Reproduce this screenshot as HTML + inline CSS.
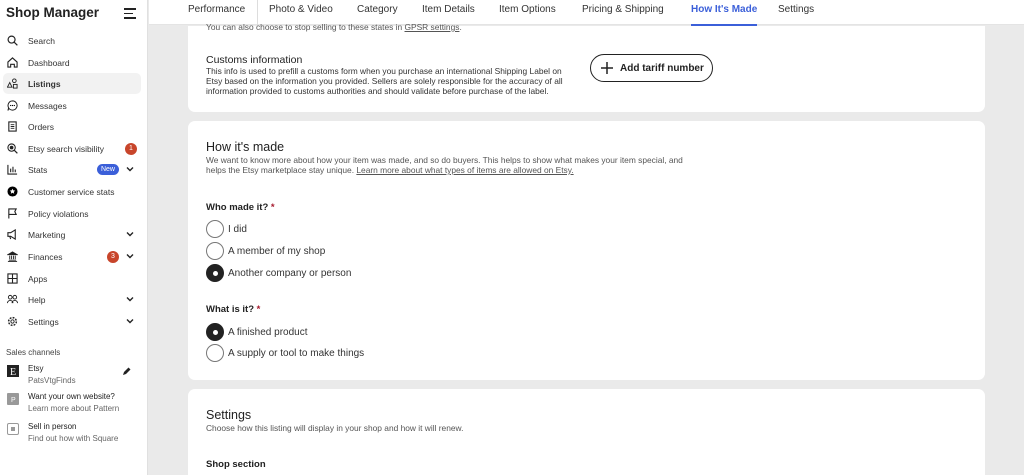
<!DOCTYPE html>
<html><head><meta charset="utf-8"><style>
*{box-sizing:border-box;margin:0;padding:0}
html,body{width:1024px;height:475px;overflow:hidden}
body{font-family:"Liberation Sans",sans-serif;background:#eaeaea;position:relative;color:#222}
.side{position:absolute;left:0;top:0;width:148px;height:475px;background:#fff;border-right:1px solid #e0e0e0}
.title{position:absolute;left:6px;top:5px;font-size:13.5px;font-weight:bold;color:#222}
.ham{position:absolute;left:124px;top:8px;width:12px}
.ham i{display:block;height:1.5px;background:#222;margin-bottom:3px}
.nav{position:absolute;left:0;width:148px;height:21px;font-size:8.5px;color:#333}
.nav .ic{position:absolute;left:7px;top:5px;width:11px;height:11px}
.nav .t{position:absolute;left:28px;top:6px}
.nav.sel{background:#f2f2f2;left:3px;width:138px;border-radius:5px}
.nav.sel .ic{left:4px}.nav.sel .t{left:25px;font-weight:bold}
.chev{position:absolute;left:126px;top:7px;width:8px;height:6px}
.badge{position:absolute;top:5px;width:12px;height:12px;border-radius:50%;background:#c8452b;color:#fff;font-size:7px;text-align:center;line-height:12px}
.new{position:absolute;left:97px;top:5px;width:22px;height:11px;border-radius:6px;background:#3b5fd9;color:#fff;font-size:7px;text-align:center;line-height:11px}
.sc{position:absolute;left:6px;top:348px;font-size:8px;color:#444}
.ch{position:absolute;left:7px;font-size:8px;color:#222}
.ch b{font-weight:normal;display:block}
.ch em{font-style:normal;color:#666;display:block;margin-top:1px}
.ch .sq{position:absolute;left:0;top:2px;width:12px;height:12px}
.ch div{position:absolute;left:21px;top:0;white-space:nowrap;line-height:11px}
.tabs{position:absolute;left:149px;top:0;right:0;height:25px;background:#fff;border-bottom:1px solid #e4e4e4;font-size:10px;color:#333}
.tabs span{position:absolute;top:4px}
.tabs .act{color:#3b5fd9;font-weight:bold}
.tabs .act:after{content:"";position:absolute;left:0;right:0;top:20px;height:2px;background:#3b5fd9}
.card{position:absolute;left:188px;width:797px;background:#fff;border-radius:7px}
.h{font-size:12.5px;position:absolute;left:18px;color:#222}
.p{font-size:8.4px;color:#555;position:absolute;left:18px;line-height:10px;white-space:nowrap}
.lab{font-size:9.5px;position:absolute;left:18px;font-weight:bold;color:#222}
.lab i{color:#a61a2e;font-style:normal}
.r{position:absolute;left:18px;font-size:10px;color:#333}
.r .c{position:absolute;left:0;top:0;width:18px;height:18px;border:1px solid #777;border-radius:50%}
.r .c.on{background:#222;border-color:#222}
.r .c.on:after{content:"";position:absolute;left:5.5px;top:5.5px;width:5px;height:5px;border-radius:50%;background:#fff}
.r span{position:absolute;left:22px;top:4px;white-space:nowrap}
.btn{position:absolute;left:402px;top:28px;width:123px;height:28px;border:1.3px solid #222;border-radius:14px;font-size:10px;font-weight:bold;line-height:28px;padding-left:29px;white-space:nowrap}
.btn svg{position:absolute;left:10px;top:7px;width:12px;height:12px}
</style></head><body>
<svg width="0" height="0" style="position:absolute"><defs><symbol id="cv" viewBox="0 0 8 6"><path d="M1 1.5l3 3 3-3" fill="none" stroke="#222" stroke-width="1.4"/></symbol></defs></svg>
<div class="side">
<div class="title">Shop Manager</div>
<div class="ham"><i></i><i style="width:9px"></i><i></i></div>
<div class="nav" style="top:30px"><svg class="ic" viewBox="0 0 12 12"><circle cx="5" cy="5" r="3.8" fill="none" stroke="#222" stroke-width="1.3"/><path d="M8 8l3.3 3.3" stroke="#222" stroke-width="1.3"/></svg><span class="t">Search</span></div>
<div class="nav" style="top:52px"><svg class="ic" viewBox="0 0 12 12"><path d="M1 11V5.5L6 1l5 4.5V11H8V8H4v3z" fill="none" stroke="#222" stroke-width="1.2"/></svg><span class="t">Dashboard</span></div>
<div class="nav sel" style="top:73px"><svg class="ic" viewBox="0 0 12 12"><circle cx="8" cy="3" r="2" fill="none" stroke="#222"/><path d="M3 5L.5 10h5z" fill="none" stroke="#222"/><rect x="7" y="7" width="4" height="4" fill="none" stroke="#222"/></svg><span class="t">Listings</span></div>
<div class="nav" style="top:95px"><svg class="ic" viewBox="0 0 12 12"><path d="M6 1a5 5 0 1 1-4 8L1 11.5l.8-3A5 5 0 0 1 6 1z" fill="none" stroke="#222" stroke-width="1.1"/><circle cx="4" cy="6" r=".7"/><circle cx="6" cy="6" r=".7"/><circle cx="8" cy="6" r=".7"/></svg><span class="t">Messages</span></div>
<div class="nav" style="top:116px"><svg class="ic" viewBox="0 0 12 12"><rect x="2" y="1" width="8" height="10" fill="none" stroke="#222" stroke-width="1.2"/><path d="M4 4h4M4 6h4M4 8h4" stroke="#222"/></svg><span class="t">Orders</span></div>
<div class="nav" style="top:138px"><svg class="ic" viewBox="0 0 12 12"><circle cx="5" cy="5" r="4" fill="none" stroke="#222" stroke-width="1.2"/><circle cx="5" cy="5" r="2" fill="#222"/><path d="M8 8l3.3 3.3" stroke="#222" stroke-width="1.3"/></svg><span class="t">Etsy search visibility</span><div class="badge" style="left:125px">1</div></div>
<div class="nav" style="top:159px"><svg class="ic" viewBox="0 0 12 12"><path d="M1 1v10h10M4 9V5M6.5 9V3M9 9V6" stroke="#222" stroke-width="1.2" fill="none"/></svg><span class="t">Stats</span><div class="new">New</div><svg class="chev"><use href="#cv"/></svg></div>
<div class="nav" style="top:181px"><svg class="ic" viewBox="0 0 12 12"><circle cx="6" cy="6" r="5.5"/><path d="M6 2.8l.9 2 2.1.2-1.6 1.4.5 2.1L6 7.4 4.1 8.5l.5-2.1L3 5l2.1-.2z" fill="#fff"/></svg><span class="t">Customer service stats</span></div>
<div class="nav" style="top:203px"><svg class="ic" viewBox="0 0 12 12"><path d="M2 11.5V1h8L8.5 4 10 7H2" fill="none" stroke="#222" stroke-width="1.2"/></svg><span class="t">Policy violations</span></div>
<div class="nav" style="top:224px"><svg class="ic" viewBox="0 0 12 12"><path d="M1 4h3l5-3v10L4 8H1zM3 8l1 3" fill="none" stroke="#222" stroke-width="1.2"/></svg><span class="t">Marketing</span><svg class="chev"><use href="#cv"/></svg></div>
<div class="nav" style="top:246px"><svg class="ic" viewBox="0 0 12 12"><path d="M1 4l5-3 5 3zM2 10h8M1 11.5h10M3 5v4M5 5v4M7 5v4M9 5v4" stroke="#222" fill="#222"/></svg><span class="t">Finances</span><div class="badge" style="left:107px">3</div><svg class="chev"><use href="#cv"/></svg></div>
<div class="nav" style="top:268px"><svg class="ic" viewBox="0 0 12 12"><rect x="1" y="1" width="10" height="10" fill="none" stroke="#222" stroke-width="1.2"/><path d="M6 1v10M1 6h10" stroke="#222" stroke-width="1.2"/></svg><span class="t">Apps</span></div>
<div class="nav" style="top:289px"><svg class="ic" viewBox="0 0 12 12"><circle cx="3.5" cy="3.5" r="2" fill="none" stroke="#222"/><circle cx="8.5" cy="3.5" r="2" fill="none" stroke="#222"/><path d="M.5 10a3 3 0 0 1 6 0M5.5 10a3 3 0 0 1 6 0" fill="none" stroke="#222"/></svg><span class="t">Help</span><svg class="chev"><use href="#cv"/></svg></div>
<div class="nav" style="top:311px"><svg class="ic" viewBox="0 0 12 12"><circle cx="6" cy="6" r="4.2" fill="none" stroke="#222" stroke-width="1.6" stroke-dasharray="2 1.3"/><circle cx="6" cy="6" r="1.8" fill="none" stroke="#222"/></svg><span class="t">Settings</span><svg class="chev"><use href="#cv"/></svg></div>
<div class="sc">Sales channels</div>
<div class="ch" style="top:363px"><svg class="sq" viewBox="0 0 12 12"><rect width="12" height="12" fill="#222"/><text x="3" y="10" fill="#fff" font-size="10" font-family="Liberation Serif">E</text></svg><div><b>Etsy</b><em>PatsVtgFinds</em></div><svg style="position:absolute;left:115px;top:4px;width:9px;height:9px" viewBox="0 0 9 9"><path d="M1 8l1-3 4.5-4.5 2 2L4 7z" fill="#222"/></svg></div>
<div class="ch" style="top:391px"><svg class="sq" viewBox="0 0 12 12"><rect width="12" height="12" rx="1" fill="#999"/><text x="4" y="9" fill="#fff" font-size="7">P</text></svg><div><b>Want your own website?</b><em>Learn more about Pattern</em></div></div>
<div class="ch" style="top:421px"><svg class="sq" viewBox="0 0 12 12"><rect x=".5" y=".5" width="11" height="11" rx="1.5" fill="none" stroke="#999"/><rect x="4" y="4" width="4" height="4" fill="#999"/></svg><div><b>Sell in person</b><em>Find out how with Square</em></div></div>
</div>
<div class="tabs">
<span style="left:39px">Performance</span>
<div style="position:absolute;left:108px;top:0;width:1px;height:25px;background:#ddd"></div>
<span style="left:120px">Photo &amp; Video</span>
<span style="left:208px">Category</span>
<span style="left:273px">Item Details</span>
<span style="left:350px">Item Options</span>
<span style="left:433px">Pricing &amp; Shipping</span>
<span class="act" style="left:542px">How It's Made</span>
<span style="left:629px">Settings</span>
</div>
<div class="card" style="top:26px;height:86px;border-radius:0 0 7px 7px">
<div class="p" style="top:-4px">You can also choose to stop selling to these states in <u>GPSR settings</u>.</div>
<div class="lab" style="top:28px;font-weight:normal;font-size:10.5px;color:#222">Customs information</div>
<div class="p" style="top:40px;color:#333">This info is used to prefill a customs form when you purchase an international Shipping Label on<br>Etsy based on the information you provided. Sellers are solely responsible for the accuracy of all<br>information provided to customs authorities and should validate before purchase of the label.</div>
<div class="btn"><svg viewBox="0 0 12 12"><path d="M6 0v12M0 6h12" stroke="#222" stroke-width="1.5"/></svg>Add tariff number</div>
</div>
<div class="card" style="top:121px;height:259px">
<div class="h" style="top:19px">How it's made</div>
<div class="p" style="top:34px">We want to know more about how your item was made, and so do buyers. This helps to show what makes your item special, and<br>helps the Etsy marketplace stay unique. <u>Learn more about what types of items are allowed on Etsy.</u></div>
<div class="lab" style="top:81px">Who made it? <i>*</i></div>
<div class="r" style="top:99px"><div class="c"></div><span>I did</span></div>
<div class="r" style="top:121px"><div class="c"></div><span>A member of my shop</span></div>
<div class="r" style="top:143px"><div class="c on"></div><span>Another company or person</span></div>
<div class="lab" style="top:183px">What is it? <i>*</i></div>
<div class="r" style="top:202px"><div class="c on"></div><span>A finished product</span></div>
<div class="r" style="top:223px"><div class="c"></div><span>A supply or tool to make things</span></div>
</div>
<div class="card" style="top:389px;height:86px;border-radius:7px 7px 0 0">
<div class="h" style="top:19px">Settings</div>
<div class="p" style="top:34px">Choose how this listing will display in your shop and how it will renew.</div>
<div class="lab" style="top:70px">Shop section</div>
</div>
</body></html>
